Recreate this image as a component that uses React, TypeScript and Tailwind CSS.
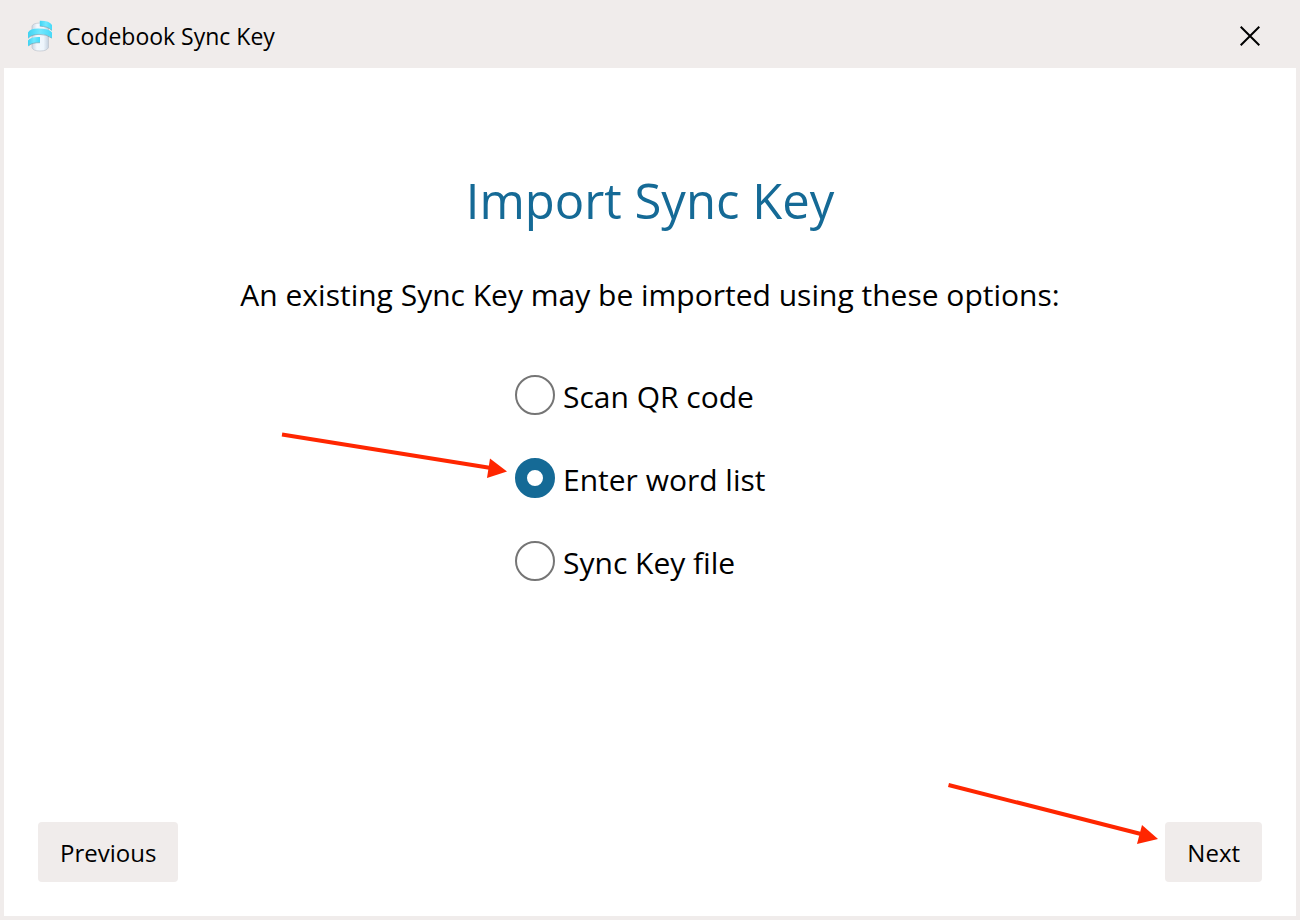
import { useState } from "react";

type ImportOption = {
  id: string;
  label: string;
};

const options: ImportOption[] = [
  { id: "qr", label: "Scan QR code" },
  { id: "words", label: "Enter word list" },
  { id: "file", label: "Sync Key file" },
];

export default function App() {
  const [selected, setSelected] = useState("words");

  return (
    <div className="flex min-h-screen flex-col bg-[#f0eceb] px-1 pb-1 font-['Open_Sans','Noto_Sans',sans-serif] text-black">
      <TitleBar />
      <main className="flex flex-1 flex-col bg-white px-[34px] pt-24 pb-[34px]">
        <h1 className="text-center text-[49px] leading-[72px] text-[#156a96]">
          Import Sync Key
        </h1>
        <p className="mt-9 text-center text-[30px] leading-[46px]">
          An existing Sync Key may be imported using these options:
        </p>
        <fieldset
          aria-label="Import method"
          className="mx-auto mt-[57px] flex w-[270px] flex-col gap-[43px]"
        >
          {options.map((option) => (
            <OptionRow
              key={option.id}
              option={option}
              checked={selected === option.id}
              onSelect={() => setSelected(option.id)}
            />
          ))}
        </fieldset>
        <footer className="mt-auto flex justify-between">
          <button className="h-[60px] rounded bg-[#f0eceb] px-[22px] pt-0.5 text-[24px]">
            Previous
          </button>
          <div className="relative">
            <NextArrow />
            <button className="h-[60px] rounded bg-[#f0eceb] px-[22px] pt-0.5 text-[24px]">
              Next
            </button>
          </div>
        </footer>
      </main>
    </div>
  );
}

function TitleBar() {
  return (
    <header className="flex h-[68px] items-center justify-between pt-1 pr-9 pl-[22px]">
      <div className="flex items-center gap-3">
        <AppIcon />
        <span className="text-[23px] leading-8">Codebook Sync Key</span>
      </div>
      <button aria-label="Close" className="flex size-5 items-center justify-center">
        <svg viewBox="0 0 20 20" className="size-5" stroke="#000" strokeWidth="2">
          <path d="M0.7 0.7 19.3 19.3M19.3 0.7 0.7 19.3" />
        </svg>
      </button>
    </header>
  );
}

function OptionRow({
  option,
  checked,
  onSelect,
}: {
  option: ImportOption;
  checked: boolean;
  onSelect: () => void;
}) {
  return (
    <label className="relative flex h-10 items-center gap-2 text-[30px] leading-10 whitespace-nowrap">
      {option.id === "words" && <OptionArrow />}
      <input
        type="radio"
        name="import-method"
        checked={checked}
        onChange={onSelect}
        className="size-10 shrink-0 appearance-none rounded-full border-2 border-[#757575] bg-white checked:border-[12px] checked:border-[#156a96]"
      />
      <span className="pt-1">{option.label}</span>
    </label>
  );
}

function OptionArrow() {
  return (
    <svg
      viewBox="0 0 226 48"
      className="absolute right-full bottom-[18px] mr-2 h-12 w-[226px]"
      aria-hidden="true"
    >
      <path d="M1 2.5 210 36" stroke="#ff2600" strokeWidth="4" />
      <path d="M209 26.5 226 39.5 206 46Z" fill="#ff2600" />
    </svg>
  );
}

function NextArrow() {
  return (
    <svg
      viewBox="0 0 210 64"
      className="absolute right-full bottom-[36px] mr-[7px] h-16 w-[210px]"
      aria-hidden="true"
    >
      <path d="M0.5 3 193 52" stroke="#ff2600" strokeWidth="4" />
      <path d="M194 43 210 57 189 62Z" fill="#ff2600" />
    </svg>
  );
}

// Cylinder with a ribbon wrapped around it
function AppIcon() {
  return (
    <svg viewBox="0 0 28 34" className="h-[34px] w-7" aria-hidden="true">
      <defs>
        <linearGradient id="cylinder" x1="0" x2="1">
          <stop offset="0" stopColor="#c9d6e3" />
          <stop offset="0.3" stopColor="#f3f8fd" />
          <stop offset="0.7" stopColor="#edf5fc" />
          <stop offset="1" stopColor="#c3d0de" />
        </linearGradient>
        <linearGradient id="ribbon" x1="0" x2="1">
          <stop offset="0" stopColor="#3fd3f2" />
          <stop offset="0.5" stopColor="#72e8ff" />
          <stop offset="1" stopColor="#45d9f8" />
        </linearGradient>
      </defs>
      <path
        d="M6 7Q7 4.200 14 4Q21 4 22.500 8V28.500Q21 32 14 32Q7 32 6 28.500Z"
        fill="url(#cylinder)"
        stroke="#b7bec8"
        strokeWidth="0.6"
      />
      <path d="M13.800 1.700Q23.500 1.500 26 6V12Q23.500 7.500 13.800 7Z" fill="url(#ribbon)" />
      <path
        d="M2 13.500Q4 9.700 12 9.500Q23.500 9.500 26 13.500V19.500Q22 15 13 15.200Q4.500 15.500 2 19.500Z"
        fill="url(#ribbon)"
      />
      <path d="M2 21.500Q4.500 17.500 14 18V23.500Q5 23.500 2 27.500Z" fill="url(#ribbon)" />
      <path
        d="M13.800 7.200Q22 7.500 25.500 11.200M2.500 19Q5 15.700 13 15.400Q21 15.200 25.500 19M3 26.500Q6 23.600 14 23.700"
        fill="none"
        stroke="#5b8b99"
        strokeWidth="0.5"
      />
    </svg>
  );
}
